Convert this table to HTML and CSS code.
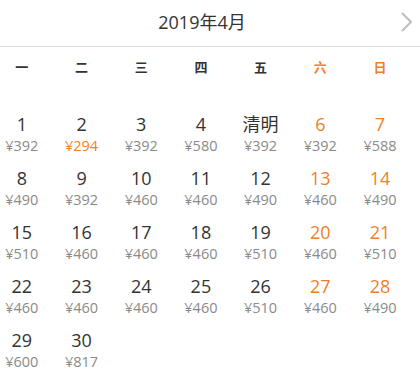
FILE: index.html
```html
<!DOCTYPE html>
<html lang="zh-CN">
<head>
<meta charset="utf-8">
<link rel="stylesheet" href="styles.css">
</head>
<body>
<div class="cal">
  <div class="head">
    <span></span>
    <span class="title">2019年4月</span>
    <span class="next"><svg width="14" height="22" viewBox="0 0 14 22"><path d="M2 2 L11 11 L2 20" fill="none" stroke="#bdbdbd" stroke-width="2"/></svg></span>
  </div>
  <div class="grid week">
    <div>一</div><div>二</div><div>三</div><div>四</div><div>五</div><div class="we">六</div><div class="we">日</div>
  </div>
  <div class="grid days">
    <div class="d"><b>1</b><i>¥392</i></div>
    <div class="d"><b>2</b><i class="low">¥294</i></div>
    <div class="d"><b>3</b><i>¥392</i></div>
    <div class="d"><b>4</b><i>¥580</i></div>
    <div class="d"><b>清明</b><i>¥392</i></div>
    <div class="d we"><b>6</b><i>¥392</i></div>
    <div class="d we"><b>7</b><i>¥588</i></div>

    <div class="d"><b>8</b><i>¥490</i></div>
    <div class="d"><b>9</b><i>¥392</i></div>
    <div class="d"><b>10</b><i>¥460</i></div>
    <div class="d"><b>11</b><i>¥460</i></div>
    <div class="d"><b>12</b><i>¥490</i></div>
    <div class="d we"><b>13</b><i>¥460</i></div>
    <div class="d we"><b>14</b><i>¥490</i></div>

    <div class="d"><b>15</b><i>¥510</i></div>
    <div class="d"><b>16</b><i>¥460</i></div>
    <div class="d"><b>17</b><i>¥460</i></div>
    <div class="d"><b>18</b><i>¥460</i></div>
    <div class="d"><b>19</b><i>¥510</i></div>
    <div class="d we"><b>20</b><i>¥460</i></div>
    <div class="d we"><b>21</b><i>¥510</i></div>

    <div class="d"><b>22</b><i>¥460</i></div>
    <div class="d"><b>23</b><i>¥460</i></div>
    <div class="d"><b>24</b><i>¥460</i></div>
    <div class="d"><b>25</b><i>¥460</i></div>
    <div class="d"><b>26</b><i>¥510</i></div>
    <div class="d we"><b>27</b><i>¥460</i></div>
    <div class="d we"><b>28</b><i>¥490</i></div>

    <div class="d"><b>29</b><i>¥600</i></div>
    <div class="d"><b>30</b><i>¥817</i></div>
  </div>
</div>
</body>
</html>
```
FILE: styles.css
```css
html, body {
  margin: 0;
  padding: 0;
  background: #fff;
}
body {
  font-family: "Open Sans", "Noto Sans CJK SC", sans-serif;
  color: #333;
}
.cal {
  width: 420px;
}
.head {
  height: 46px;
  border-bottom: 1px solid #dedede;
  display: grid;
  grid-template-columns: 1fr auto 1fr;
  align-items: center;
  padding-right: 16px;
}
.title {
  font-size: 18px;
  line-height: 44px;
  padding-bottom: 2px;
  color: #333;
}
.next {
  justify-self: end;
  margin-right: -10px;
  display: flex;
  align-items: center;
  padding-bottom: 3px;
}
.grid {
  display: grid;
  grid-template-columns: repeat(7, 59.7px);
}
.grid > div {
  padding-right: 16px;
  text-align: center;
}
.week {
  height: 40px;
  line-height: 40px;
  font-size: 13px;
  font-weight: bold;
  color: #333;
}
.week .we {
  color: #f07f2a;
}
.days {
  padding-top: 25px;
}
.d {
  height: 54px;
  display: flex;
  flex-direction: column;
  align-items: center;
}
.d b {
  font-weight: normal;
  font-size: 18px;
  line-height: 24px;
  color: #333;
}
.d i {
  font-style: normal;
  font-size: 14.5px;
  line-height: 20px;
  color: #8a8a8a;
}
.d.we b {
  color: #f07f2a;
}
.d i.low {
  color: #f07f2a;
}
```
